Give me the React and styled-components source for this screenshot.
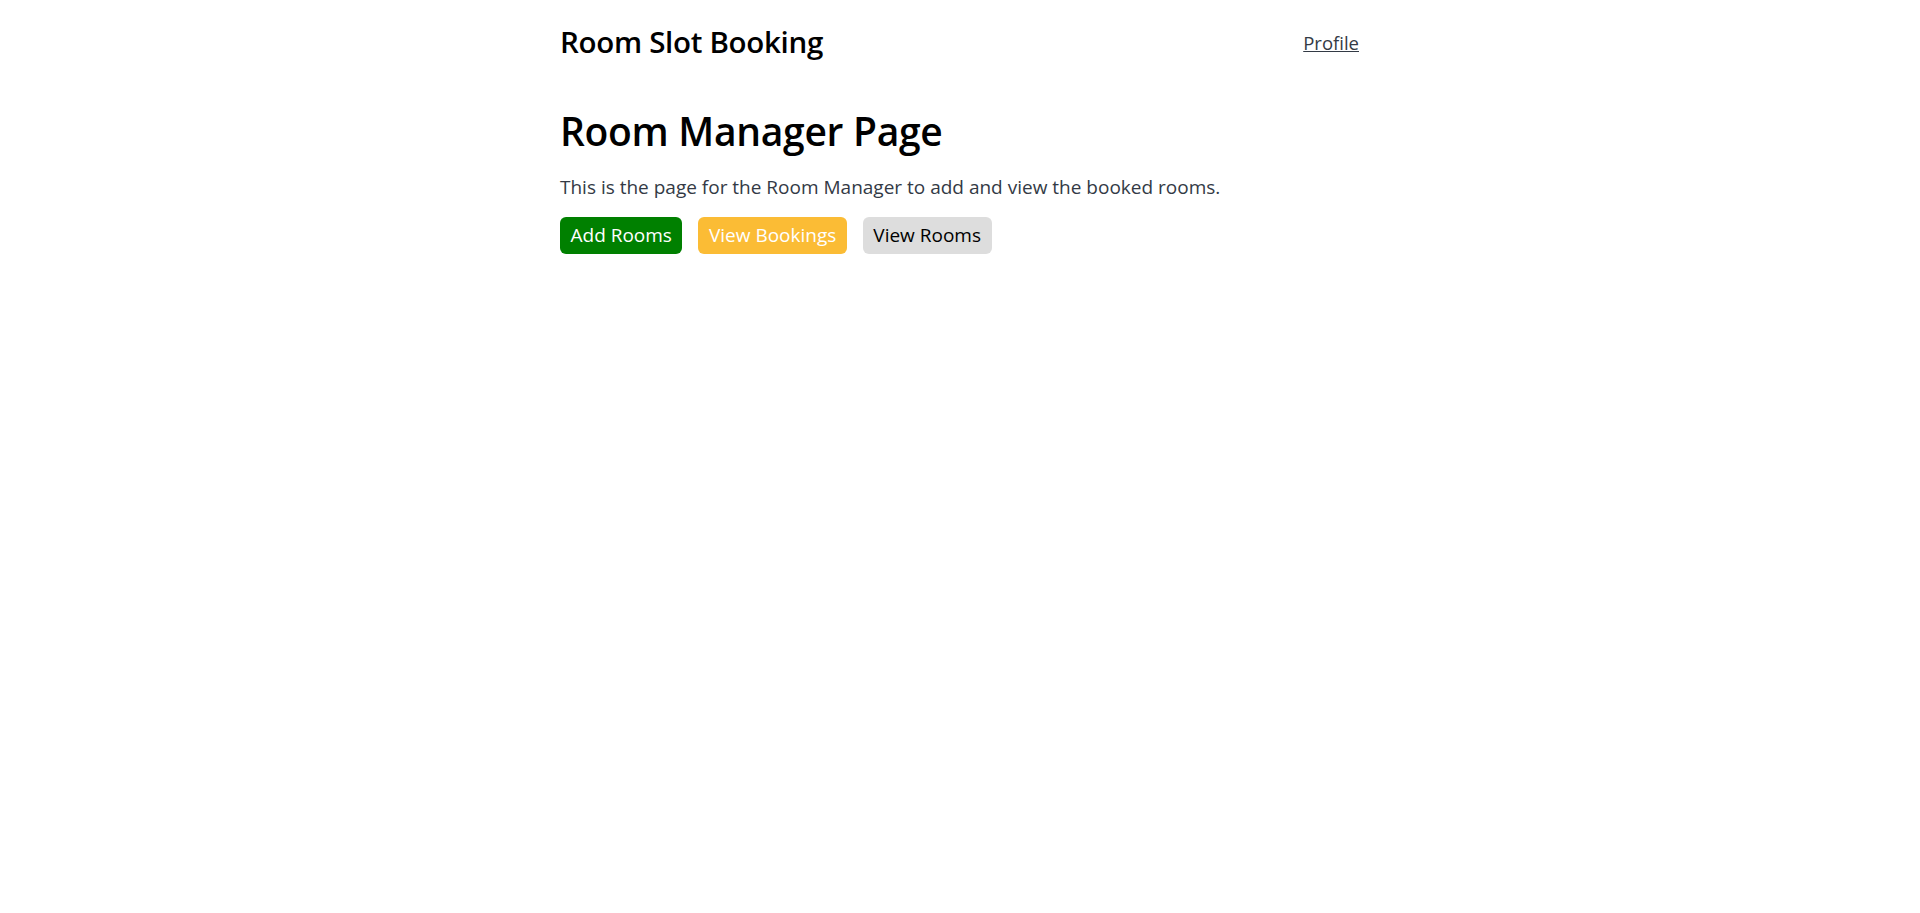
import React from 'react'
import styled, { createGlobalStyle } from 'styled-components'

const GlobalStyle = createGlobalStyle`
  body {
    margin: 0;
    background: #ffffff;
    font-family: "Open Sans", "Noto Sans", sans-serif;
    color: #000000;
  }
`

function App() {
  return (
    <>
      <GlobalStyle />
      <Page>
        <Header>
          <Brand>Room Slot Booking</Brand>
          <NavLink href="#">Profile</NavLink>
        </Header>
        <Main>
          <Title>Room Manager Page</Title>
          <Intro>This is the page for the Room Manager to add and view the booked rooms.</Intro>
          <Actions>
            <Button $variant="green">Add Rooms</Button>
            <Button $variant="orange">View Bookings</Button>
            <Button $variant="gray">View Rooms</Button>
          </Actions>
        </Main>
      </Page>
    </>
  )
}

export default App

const Page = styled.div`
  max-width: 800px;
  margin: 0 auto;
`

const Header = styled.header`
  display: flex;
  align-items: center;
  justify-content: space-between;
  padding-top: 18px;
  height: 46px;
`

const Brand = styled.div`
  font-size: 29.5px;
  font-weight: 600;
  letter-spacing: -0.3px;
`

const NavLink = styled.a`
  font-size: 18.5px;
  color: #333a45;
  text-decoration: underline;
  margin-right: 1px;
  margin-top: 2px;
`

const Main = styled.main`
  padding-top: 42px;
`

const Title = styled.h1`
  margin: 0;
  font-size: 39px;
  font-weight: 600;
  letter-spacing: -0.3px;
  line-height: 1.3;
`

const Intro = styled.p`
  margin: 17px 0 17px;
  font-size: 19px;
  color: #333a45;
`

const variants = {
  green: { bg: '#008000', fg: '#ffffff' },
  orange: { bg: '#fbbc35', fg: '#ffffff' },
  gray: { bg: '#dddddd', fg: '#000000' },
}

const Actions = styled.div`
  display: flex;
  gap: 16px;
`

const Button = styled.button`
  font-family: inherit;
  font-size: 19px;
  height: 37px;
  padding: 0 10.5px;
  border: none;
  border-radius: 6px;
  cursor: pointer;
  background: ${(p) => variants[p.$variant].bg};
  color: ${(p) => variants[p.$variant].fg};
`
